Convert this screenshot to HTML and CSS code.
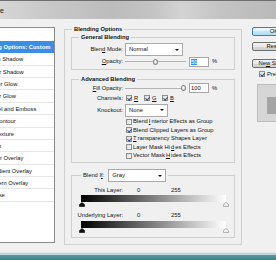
FILE: index.html
```html
<!DOCTYPE html>
<html lang="en">

<head>
  <meta charset="UTF-8">
  <title>Layer Style</title>
  <link rel="stylesheet" href="styles.css">
</head>

<body>
  <div class="titlebar"><span class="title">Layer Style</span></div>

  <div class="dialog">
    <ul class="styles">
      <li class="head">Styles</li>
      <li class="top sel">Blending Options: Custom</li>
      <li>Drop Shadow</li>
      <li>Inner Shadow</li>
      <li>Outer Glow</li>
      <li>Inner Glow</li>
      <li>Bevel and Emboss</li>
      <li class="sub">Contour</li>
      <li class="sub">Texture</li>
      <li>Satin</li>
      <li>Color Overlay</li>
      <li>Gradient Overlay</li>
      <li>Pattern Overlay</li>
      <li>Stroke</li>
    </ul>

    <fieldset class="outer">
      <legend>Blending Options</legend>

      <fieldset class="group general">
        <legend>General Blending</legend>
        <div class="form general-rows">
          <label>Blen<u>d</u> Mode:</label>
          <div class="select mode">Normal<span class="arrow"></span></div>
          <label><u>O</u>pacity:</label>
          <div class="slider-row">
            <div class="slider"><span class="knob" style="margin-left: 28px"></span></div>
            <span class="num"><span class="hl">50</span></span>
            <span class="pct">%</span>
          </div>
        </div>
      </fieldset>

      <fieldset class="group advanced">
        <legend>Advanced Blending</legend>
        <div class="form advanced-rows">
          <label><u>F</u>ill Opacity:</label>
          <div class="slider-row">
            <div class="slider"><span class="knob" style="margin-left: 56px"></span></div>
            <span class="num">100</span>
            <span class="pct">%</span>
          </div>
          <label>Channels:</label>
          <div class="channels">
            <span class="chan"><span class="cb on"></span><u>R</u></span>
            <span class="chan"><span class="cb on"></span><u>G</u></span>
            <span class="chan"><span class="cb on"></span><u>B</u></span>
          </div>
          <label>Knockout:</label>
          <div class="select knock">None<span class="arrow"></span></div>
          <div class="checks">
            <div class="chk"><span class="cb"></span>Blend <u>I</u>nterior Effects as Group</div>
            <div class="chk"><span class="cb on"></span>Blend Clipped Layers as Group</div>
            <div class="chk"><span class="cb on"></span><u>T</u>ransparency Shapes Layer</div>
            <div class="chk"><span class="cb"></span>Layer Mask Hi<u>d</u>es Effects</div>
            <div class="chk"><span class="cb"></span>Vector Mask <u>H</u>ides Effects</div>
          </div>
        </div>
      </fieldset>

      <fieldset class="group blendif">
        <legend>
          <span>Blend I<u>f</u>:</span>
          <span class="select gray">Gray<span class="arrow"></span></span>
        </legend>
        <div class="lrow">
          <span class="lbl">This Layer:</span><span class="lo">0</span><span>255</span>
        </div>
        <div class="bar"></div>
        <div class="thumbs">
          <svg width="6" height="5" viewBox="0 0 6 5"><path d="M3 0.5 L5.5 2.5 V4.5 H0.5 V2.5 Z" fill="#111" stroke="#000" stroke-width="0.6"/></svg>
          <svg width="6" height="5" viewBox="0 0 6 5"><path d="M3 0.5 L5.5 2.5 V4.5 H0.5 V2.5 Z" fill="#f4f4f4" stroke="#8a8a8a" stroke-width="0.6"/></svg>
        </div>
        <div class="lrow under">
          <span class="lbl">Underlying Layer:</span><span class="lo">0</span><span>255</span>
        </div>
        <div class="bar under"></div>
        <div class="thumbs">
          <svg width="6" height="5" viewBox="0 0 6 5"><path d="M3 0.5 L5.5 2.5 V4.5 H0.5 V2.5 Z" fill="#111" stroke="#000" stroke-width="0.6"/></svg>
          <svg width="6" height="5" viewBox="0 0 6 5"><path d="M3 0.5 L5.5 2.5 V4.5 H0.5 V2.5 Z" fill="#f4f4f4" stroke="#8a8a8a" stroke-width="0.6"/></svg>
        </div>
      </fieldset>
    </fieldset>

    <div class="side">
      <div class="btn default">OK</div>
      <div class="btn reset">Reset</div>
      <div class="btn newstyle">Ne<u>w</u> Style...</div>
      <div class="preview"><span class="cb on"></span>Pre<u>v</u>iew</div>
      <div class="swatch"><div class="swatch-inner"></div></div>
    </div>
  </div>

  <div class="frame"></div>
</body>

</html>
```

FILE: styles.css
```css
* {
  box-sizing: border-box;
}

body {
  margin: 0;
  width: 276px;
  height: 260px;
  overflow: hidden;
  background: #f0f0f0;
  color: #111;
  font: 5.8px/7px "Liberation Sans", Arial, sans-serif;
}

u {
  text-decoration-thickness: 0.5px;
}

/* window title */
.titlebar {
  height: 19px;
  display: flex;
  align-items: center;
  white-space: nowrap;
  overflow: hidden;
  border-top: 1px solid #6f6f6f;
  background: linear-gradient(to right, #d6d6d6 0, #cacaca 15%, #bcbcbc 40%, #c3c3c3 55%, #d3d3d3 66%, #c3c3c3 80%, #b9b9b9 100%);
}

.title {
  margin-left: -31px;
  font-size: 7px;
  color: #202020;
}

.dialog {
  display: flex;
  align-items: flex-start;
  height: 233px;
  padding-top: 8px;
}

/* styles list on the left */
.styles {
  flex: none;
  list-style: none;
  margin: 0 0 0 -40px;
  padding: 0;
  width: 95px;
  height: 216px;
  background: #fff;
  border: 1px solid #8a8a8a;
  white-space: nowrap;
  overflow: hidden;
}

.styles li {
  height: 12.4px;
  line-height: 12px;
  padding-left: 27px;
  border-bottom: 1px solid #e6e6e6;
}

.styles .head {
  height: 12.8px;
  padding-left: 16px;
  font-weight: bold;
  border-bottom: none;
}

.styles .top {
  padding-left: 16px;
  font-weight: bold;
}

.styles .sub {
  padding-left: 34px;
}

.styles .sel {
  background: #3a8ee6;
  color: #fff;
  border-bottom-color: #3a8ee6;
}

/* group boxes */
fieldset {
  margin: 0;
  padding: 0;
  min-width: 0;
  border: 1px solid #cfcfcf;
}

legend {
  margin-left: 7px;
  padding: 0 2px;
  line-height: 7px;
  font-weight: bold;
}

.outer {
  flex: none;
  width: 178px;
  margin: -1.5px 0 0 9px;
  padding: 1px 0 6px;
}

.group {
  margin: 0 6px;
}

.general {
  padding: 2.5px 0 2px;
}

.advanced {
  margin-top: 6px;
  padding: 0 0 2px;
}

.blendif {
  margin-top: 6px;
  padding: 4px 0 4px;
}

.form {
  display: grid;
  grid-template-columns: 51px 1fr;
  column-gap: 2px;
  align-items: center;
}

.form label {
  text-align: right;
}

.general-rows {
  grid-template-rows: 13px 11px;
}

.advanced-rows {
  grid-template-rows: 10px 10px 14px auto;
}

.select {
  display: flex;
  align-items: center;
  height: 13px;
  padding: 0 3px;
  background: #fff;
  border: 1px solid #a9a9a9;
}

.select.mode {
  width: 58px;
}

.select.knock {
  width: 43px;
}

.arrow {
  margin-left: auto;
  width: 0;
  height: 0;
  border-left: 2px solid transparent;
  border-right: 2px solid transparent;
  border-top: 2.5px solid #111;
}

.slider-row {
  display: flex;
  align-items: center;
}

.slider {
  display: flex;
  align-items: center;
  width: 61px;
  height: 10px;
  background: linear-gradient(#b3b3b3, #b3b3b3) center / 100% 1px no-repeat;
}

.knob {
  width: 5px;
  height: 6px;
  border: 1px solid #8b8b8b;
  border-radius: 50%;
  background: radial-gradient(circle at 40% 35%, #fdfdfd, #cfcfcf);
}

.num {
  width: 20px;
  height: 10px;
  margin-left: 3px;
  padding-left: 1px;
  line-height: 8px;
  background: #fff;
  border: 1px solid #a5a5a5;
}

.hl {
  background: #3399ff;
  color: #fff;
}

.pct {
  margin-left: 3px;
}

.channels {
  display: flex;
  align-items: center;
  margin-left: 1px;
}

.chan {
  display: flex;
  align-items: center;
  gap: 2px;
  width: 18px;
}

.cb {
  flex: none;
  display: inline-block;
  width: 6px;
  height: 6px;
  border: 1px solid #8f8f8f;
  background: linear-gradient(135deg, #dcdcdc, #fbfbfb);
}

.cb.on::after {
  content: "";
  display: block;
  width: 1.6px;
  height: 3.2px;
  margin: 0 0 0 1.3px;
  border: solid #22438a;
  border-width: 0 1px 1px 0;
  transform: rotate(40deg);
}

.checks {
  grid-column: 2;
  margin: 0.5px 0 0 1px;
}

.chk {
  display: flex;
  align-items: center;
  gap: 1px;
  height: 8.5px;
  white-space: nowrap;
}

/* blend if */
.blendif legend {
  display: flex;
  align-items: center;
  gap: 4px;
  margin-left: 9px;
  font-weight: normal;
}

.select.gray {
  width: 58px;
}

.lrow {
  display: flex;
  align-items: center;
  height: 8px;
}

.lrow.under {
  margin-top: 4px;
}

.lbl {
  width: 51px;
  text-align: right;
}

.lo {
  width: 34px;
  margin-left: 14px;
}

.bar {
  width: 145px;
  height: 7px;
  margin: 1px 0 0 9px;
  background: linear-gradient(to right, #000, #fff);
}

.bar.under {
  margin-top: 2px;
}

.thumbs {
  display: flex;
  justify-content: space-between;
  width: 150.5px;
  height: 5px;
  margin-left: 6.5px;
}

.thumbs svg {
  display: block;
}

/* buttons column */
.side {
  flex: none;
  display: flex;
  flex-direction: column;
  width: 50px;
  margin-left: 10px;
}

.btn {
  width: 44px;
  height: 9px;
  line-height: 7px;
  text-align: center;
  white-space: nowrap;
  border: 1px solid #707070;
  border-radius: 2px;
  background: linear-gradient(#f4f4f4, #e8e8e8 50%, #d8d8d8 50%, #cfcfcf);
}

.btn.default {
  border-color: #3c7fb1;
  background: linear-gradient(#ecf7fd, #dcf1fc 50%, #c3e7fb 50%, #aedcf4);
}

.reset {
  margin-top: 6px;
}

.newstyle {
  margin-top: 8px;
}

.preview {
  display: flex;
  align-items: center;
  gap: 2px;
  height: 6px;
  margin: 3px 0 0 7px;
  white-space: nowrap;
}

.swatch {
  width: 40px;
  height: 38px;
  margin: 7px 0 0 5px;
  padding: 12px 0 0 9px;
  background: #d6d6d6;
  border: 1px solid #bdbdbd;
}

.swatch-inner {
  width: 22px;
  height: 17px;
  background: #a4a4a4;
}

/* window frame under the dialog */
.frame {
  height: 8px;
  background: linear-gradient(#e2e6e6 0 1px, #bcd8da 1px 3px, #5c9b9e 3px, #3f7e82);
}
```
